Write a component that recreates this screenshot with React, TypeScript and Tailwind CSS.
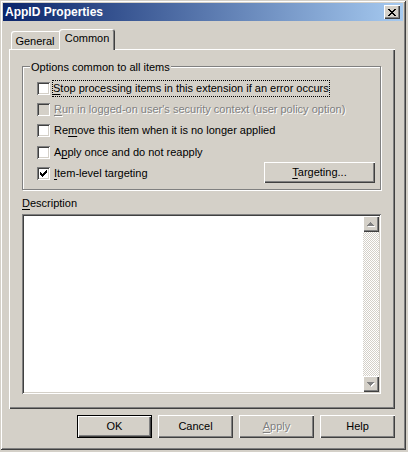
import type { ReactNode } from "react";

const raised =
  "bg-[#d4d0c8] shadow-[inset_1px_1px_0_#ffffff,inset_-1px_-1px_0_#404040,inset_-2px_-2px_0_#808080]";
const sunken =
  "shadow-[inset_1px_1px_0_#808080,inset_-1px_-1px_0_#ffffff,inset_2px_2px_0_#404040,inset_-2px_-2px_0_#d4d0c8]";

function U({ children }: { children: ReactNode }) {
  return <span className="underline decoration-[1px] underline-offset-[2px]">{children}</span>;
}

function Checkbox({ checked, disabled }: { checked?: boolean; disabled?: boolean }) {
  return (
    <span
      className={[
        "flex h-[13px] w-[13px] shrink-0 items-center justify-center",
        sunken,
        disabled ? "bg-[#d4d0c8]" : "bg-white",
      ].join(" ")}
    >
      {checked ? (
        <svg width="7" height="7" viewBox="0 0 7 7" shapeRendering="crispEdges">
          <rect x="0" y="2" width="1" height="3" fill="#000" />
          <rect x="1" y="3" width="1" height="3" fill="#000" />
          <rect x="2" y="4" width="1" height="3" fill="#000" />
          <rect x="3" y="3" width="1" height="3" fill="#000" />
          <rect x="4" y="2" width="1" height="3" fill="#000" />
          <rect x="5" y="1" width="1" height="3" fill="#000" />
          <rect x="6" y="0" width="1" height="3" fill="#000" />
        </svg>
      ) : null}
    </span>
  );
}

function Arrow({ down }: { down?: boolean }) {
  const rows = down
    ? [
        [4, 7],
        [5, 5],
        [6, 3],
        [7, 1],
      ]
    : [
        [7, 1],
        [6, 3],
        [5, 5],
        [4, 7],
      ];
  return (
    <svg width="16" height="16" viewBox="0 0 16 16" shapeRendering="crispEdges">
      {rows.map(([x, w], i) => (
        <rect key={"s" + i} x={x + 1} y={7 + i} width={w} height="1" fill="#ffffff" />
      ))}
      {rows.map(([x, w], i) => (
        <rect key={"a" + i} x={x} y={6 + i} width={w} height="1" fill="#808080" />
      ))}
    </svg>
  );
}

function DialogButton({
  children,
  isDefault,
  disabled,
}: {
  children: ReactNode;
  isDefault?: boolean;
  disabled?: boolean;
}) {
  return (
    <div
      className={[
        "flex h-[23px] w-[75px] items-center justify-center",
        raised,
        isDefault ? "border border-black" : "",
        disabled ? "text-[#808080] [text-shadow:1px_1px_0_#ffffff]" : "",
      ].join(" ")}
    >
      {children}
    </div>
  );
}

export default function App() {
  return (
    <div className="h-[452px] w-[408px] overflow-hidden bg-[#d4d0c8] font-['Liberation_Sans',Arial,sans-serif] text-[11px] leading-[13px] text-black">
      <div className="flex h-[450px] w-[406px] flex-col bg-[#d4d0c8] p-[3px] shadow-[inset_1px_1px_0_#d4d0c8,inset_-1px_-1px_0_#404040,inset_2px_2px_0_#ffffff,inset_-2px_-2px_0_#808080]">
        {/* title bar */}
        <div className="flex h-[18px] shrink-0 items-center justify-between bg-[image:linear-gradient(to_right,#0a246a,#a6caf0)] pl-[2px] pr-[3px]">
          <span className="text-[12px] font-bold leading-[14px] text-white">AppID Properties</span>
          <div className={["flex h-[14px] w-[16px] items-center justify-center", raised].join(" ")}>
            <svg width="8" height="7" viewBox="0 0 8 7" shapeRendering="crispEdges">
              <rect x="0" y="0" width="2" height="1" fill="#000" />
              <rect x="6" y="0" width="2" height="1" fill="#000" />
              <rect x="1" y="1" width="2" height="1" fill="#000" />
              <rect x="5" y="1" width="2" height="1" fill="#000" />
              <rect x="2" y="2" width="4" height="1" fill="#000" />
              <rect x="3" y="3" width="2" height="1" fill="#000" />
              <rect x="2" y="4" width="4" height="1" fill="#000" />
              <rect x="1" y="5" width="2" height="1" fill="#000" />
              <rect x="5" y="5" width="2" height="1" fill="#000" />
              <rect x="0" y="6" width="2" height="1" fill="#000" />
              <rect x="6" y="6" width="2" height="1" fill="#000" />
            </svg>
          </div>
        </div>

        {/* tabs */}
        <div className="ml-[6px] mt-[8px] flex h-[20px] shrink-0 items-end pl-[2px]">
          <div className="flex h-[18px] w-[48px] items-start justify-center rounded-tl-[3px] pt-[4px] shadow-[inset_1px_1px_0_#ffffff]">
            General
          </div>
          <div className="relative z-10 -mb-px flex h-[21px] w-[56px] items-start justify-center rounded-t-[3px] bg-[#d4d0c8] pt-[3px] shadow-[inset_1px_1px_0_#ffffff,inset_-1px_0_0_#404040,inset_-2px_0_0_#808080]">
            Common
          </div>
        </div>

        {/* tab page */}
        <div className="ml-[6px] flex h-[360px] w-[386px] shrink-0 flex-col shadow-[inset_1px_1px_0_#ffffff,inset_-1px_-1px_0_#404040,inset_-2px_-2px_0_#808080]">
          <div className="relative ml-[13px] mt-[17px] h-[124px] w-[359px] border border-[#808080] shadow-[1px_1px_0_#ffffff,inset_1px_1px_0_#ffffff]">
            <span className="absolute -top-[6px] left-[7px] bg-[#d4d0c8] px-[1px]">
              Options common to all items
            </span>
            <div className="flex flex-col pl-[14px] pr-[5px] pt-[15px]">
              <div className="flex h-[13px] items-start">
                <Checkbox />
                <span className="-mt-[2px] ml-[2px] border border-dotted border-black py-[1px]">
                  <U>S</U>top processing items in this extension if an error occurs
                </span>
              </div>
              <div className="mt-[8px] flex h-[13px] items-start">
                <Checkbox disabled />
                <span className="ml-[4px] text-[#808080] [text-shadow:1px_1px_0_#ffffff]">
                  <U>R</U>un in logged-on user's security context (user policy option)
                </span>
              </div>
              <div className="mt-[8px] flex h-[13px] items-start">
                <Checkbox />
                <span className="ml-[4px]">
                  Re<U>m</U>ove this item when it is no longer applied
                </span>
              </div>
              <div className="mt-[9px] flex h-[13px] items-start">
                <Checkbox />
                <span className="ml-[4px]">
                  A<U>p</U>ply once and do not reapply
                </span>
              </div>
              <div className="mt-[8px] flex h-[13px] items-start justify-between">
                <div className="flex items-start">
                  <Checkbox checked />
                  <span className="ml-[4px]">
                    <U>I</U>tem-level targeting
                  </span>
                </div>
                <div className={["-mt-[5px] flex h-[21px] w-[111px] items-center justify-center", raised].join(" ")}>
                  <span>
                    <U>T</U>argeting...
                  </span>
                </div>
              </div>
            </div>
          </div>

          <div className="ml-[13px] mt-[7px]">
            <U>D</U>escription
          </div>
          <div className={["ml-[13px] mt-[4px] flex h-[180px] w-[359px] justify-end bg-white p-[2px]", sunken].join(" ")}>
            <div className="flex w-[16px] flex-col">
              <div className={["h-[16px] w-[16px]", raised].join(" ")}>
                <Arrow />
              </div>
              <div className="flex-1 bg-[image:repeating-conic-gradient(#d4d0c8_0%_25%,#ffffff_0%_50%)] bg-[length:2px_2px]" />
              <div className={["h-[16px] w-[16px]", raised].join(" ")}>
                <Arrow down />
              </div>
            </div>
          </div>
        </div>

        {/* dialog buttons */}
        <div className="mt-[6px] flex justify-end gap-[6px] pr-[8px]">
          <DialogButton isDefault>OK</DialogButton>
          <DialogButton>Cancel</DialogButton>
          <DialogButton disabled>
            <span>
              <U>A</U>pply
            </span>
          </DialogButton>
          <DialogButton>Help</DialogButton>
        </div>
      </div>
    </div>
  );
}
